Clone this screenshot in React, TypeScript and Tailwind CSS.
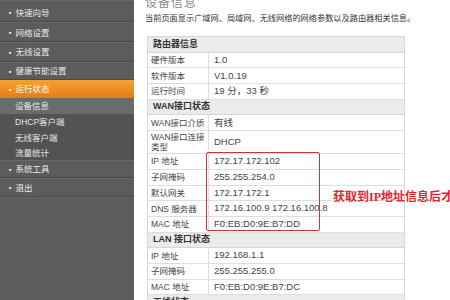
import React from "react";

const cjk = { fontFamily: '"Liberation Sans", "Noto Sans CJK SC", sans-serif' };

type Row = { label: string; value?: string; header?: boolean; tall?: boolean };

const rows: Row[] = [
  { label: "路由器信息", header: true },
  { label: "硬件版本", value: "1.0" },
  { label: "软件版本", value: "V1.0.19" },
  { label: "运行时间", value: "19 分，33 秒" },
  { label: "WAN接口状态", header: true },
  { label: "WAN接口介质", value: "有线" },
  { label: "WAN接口连接类型", value: "DHCP", tall: true },
  { label: "IP 地址", value: "172.17.172.102" },
  { label: "子网掩码", value: "255.255.254.0" },
  { label: "默认网关", value: "172.17.172.1" },
  { label: "DNS 服务器", value: "172.16.100.9 172.16.100.8" },
  { label: "MAC 地址", value: "F0:EB:D0:9E:B7:DD" },
  { label: "LAN 接口状态", header: true },
  { label: "IP 地址", value: "192.168.1.1" },
  { label: "子网掩码", value: "255.255.255.0" },
  { label: "MAC 地址", value: "F0:EB:D0:9E:B7:DC" },
  { label: "无线状态", header: true },
];

function MainItem({ label, h, pt = "pt-[1px]" }: { label: string; h: string; pt?: string }) {
  return (
    <div className={`flex items-center ${h} ${pt} border-b border-b-[#4a4a4a] border-t border-t-[#686868] pl-[9px] text-[8.5px] text-[#e8e8e8]`}>
      <span className="mr-[4px] text-[4px] leading-none">■</span>
      <span>{label}</span>
    </div>
  );
}

function SubItem({ label, h, active }: { label: string; h: string; active?: boolean }) {
  return (
    <div className={`flex items-center ${h} pl-[15px] pt-[1px] text-[8.5px] text-[#e6e6e6] ${active ? "bg-[#6b6b6b]" : ""}`}>
      {label}
    </div>
  );
}

export default function App() {
  return (
    <div className="relative flex h-[300px] w-[450px] overflow-hidden bg-white" style={cjk}>
      <div className="flex w-[134px] shrink-0 flex-col bg-[#5c5c5c]">
        <MainItem label="快速向导" h="h-[22px]" pt="pt-[4px]" />
        <MainItem label="网络设置" h="h-[20px]" pt="pt-[2px]" />
        <MainItem label="无线设置" h="h-[20px]" />
        <MainItem label="健康节能设置" h="h-[18px]" />
        <div className="flex h-[18px] items-center bg-gradient-to-b from-[#f6a033] to-[#e67d12] pl-[9px] pt-[1px] text-[8.5px] text-white">
          <span className="mr-[4px] text-[4px] leading-none">■</span>
          <span>运行状态</span>
        </div>
        <div className="flex flex-col bg-[#535353]">
          <SubItem label="设备信息" h="h-[16px]" active />
          <SubItem label="DHCP客户端" h="h-[16px]" />
          <SubItem label="无线客户端" h="h-[15px]" />
          <SubItem label="流量统计" h="h-[15px]" />
        </div>
        <MainItem label="系统工具" h="h-[18px]" />
        <MainItem label="退出" h="h-[19px]" />
        <div className="flex-1 border-t border-t-[#686868]" />
      </div>

      <div className="flex flex-1 flex-col pl-[11px]">
        <div className="mt-[-6px] h-[18px] text-[12px] leading-[18px] tracking-[1px] text-[#8a8a8a]">设备信息</div>
        <div className="mt-[-1px] h-[16px] text-[8.2px] leading-[16px] text-[#333]">
          当前页面显示广域网、局域网、无线网络的网络参数以及路由器相关信息。
        </div>
        <div className="ml-[2px] mt-[9px] w-[258px] border-l border-r border-t border-[#d6d6d6]">
          {rows.map((r, i) =>
            r.header ? (
              <div
                key={i}
                className="flex h-[15.7px] items-center border-b border-[#d6d6d6] bg-[#ebebeb] pl-[5px] text-[9px] font-bold text-[#333]"
              >
                {r.label}
              </div>
            ) : (
              <div key={i} className={`flex ${r.tall ? "h-[23px]" : "h-[15.7px]"} border-b border-[#dedede] bg-white`}>
                <div className="flex w-[61px] shrink-0 items-center border-r border-[#dedede] pl-[3px] text-[8.5px] leading-[10px] text-[#444]">
                  {r.label}
                </div>
                <div className="flex items-center pl-[5px] text-[9.5px] text-[#444]">{r.value}</div>
              </div>
            )
          )}
        </div>
      </div>

      <div className="pointer-events-none absolute left-[206px] top-[152px] h-[79px] w-[114px] rounded-[2px] border-[1.5px] border-[#c0393b]" />
      <div
        className="absolute left-[333px] top-[188px] whitespace-nowrap text-[12px] font-bold text-[#e3262c]"
        style={{ fontFamily: '"Liberation Serif", "Noto Sans CJK SC", serif' }}
      >
        获取到IP地址信息后才能
      </div>
    </div>
  );
}
